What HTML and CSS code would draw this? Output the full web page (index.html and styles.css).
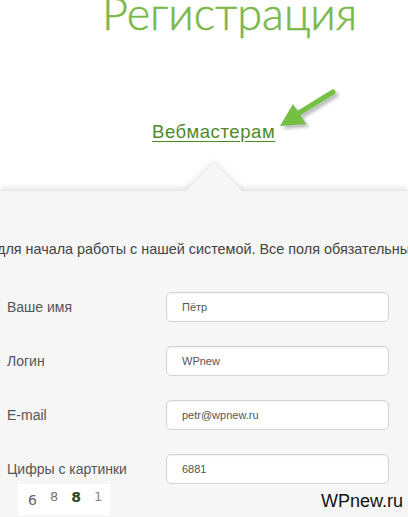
FILE: index.html
```html
<!DOCTYPE html>
<html lang="ru">
<head>
  <meta charset="UTF-8" />
  <meta name="viewport" content="width=device-width, initial-scale=1.0"/>
  <title>Регистрация</title>
  <link rel="stylesheet" href="styles.css">
</head>
<body>
  <div class="page">
    <h1 class="title">Регистрация</h1>

    <div class="tabs">
      <a href="#" class="tab">Вебмастерам</a>
      <svg class="arrow" width="80" height="56" viewBox="0 0 80 56">
        <defs>
          <filter id="blur" x="-20%" y="-20%" width="140%" height="140%">
            <feGaussianBlur stdDeviation="1.6"/>
          </filter>
        </defs>
        <g fill="#8a8a8a" stroke="#8a8a8a" opacity="0.55" filter="url(#blur)" transform="translate(3,3)">
          <line x1="62" y1="9" x2="28" y2="30" stroke-width="5" stroke-linecap="round"/>
          <polygon points="9,43 35,41 22,21" stroke="none"/>
        </g>
        <g fill="#74c043" stroke="#74c043">
          <line x1="62" y1="9" x2="28" y2="30" stroke-width="5" stroke-linecap="round"/>
          <polygon points="9,43 35,41 22,21" stroke="none"/>
        </g>
      </svg>
    </div>

    <div class="panel">
      <p class="intro">для начала работы с нашей системой. Все поля обязательны.</p>

      <form class="form">
        <label class="label" for="name">Ваше имя</label>
        <input class="field" id="name" type="text" value="Пётр" />

        <label class="label" for="login">Логин</label>
        <input class="field" id="login" type="text" value="WPnew" />

        <label class="label" for="email">E-mail</label>
        <input class="field" id="email" type="text" value="petr@wpnew.ru" />

        <label class="label" for="code">Цифры с картинки</label>
        <input class="field" id="code" type="text" value="6881" />
      </form>

      <div class="captcha">
        <span class="d1">6</span>
        <span class="d2">8</span>
        <span class="d3">8</span>
        <span class="d4">1</span>
      </div>
    </div>

    <div class="mark">WPnew.ru</div>
  </div>
</body>
</html>
```

FILE: styles.css
```css
body {
  margin: 0;
  background: #fff;
  font-family: 'Liberation Sans', Arial, sans-serif;
  color: #555;
  overflow: hidden;
}
.page {
  position: relative;
  width: 408px;
  height: 517px;
  overflow: hidden;
}
.title {
  margin: -11px 0 0 102px;
  font-family: 'Lato', 'Open Sans', sans-serif;
  font-weight: 300;
  font-size: 45px;
  line-height: 48px;
  color: #7ab84a;
  -webkit-text-stroke: 0.5px #7ab84a;
  white-space: nowrap;
}
.tabs {
  position: relative;
  margin-top: 84px;
  padding-left: 152px;
  height: 30px;
}
.tab {
  font-size: 18.5px;
  line-height: 22px;
  letter-spacing: 0.6px;
  color: #4f8a2b;
  text-decoration: underline;
  text-underline-offset: 3px;
}
.arrow {
  position: absolute;
  left: 271px;
  top: -38px;
}
.panel {
  position: relative;
  margin-top: 40px;
  height: 400px;
  background: #f6f6f6;
  box-shadow: 0 -2px 7px rgba(0,0,0,0.14);
}
/* notch over the tab, only the upper half is shown */
.panel::before {
  content: "";
  position: absolute;
  z-index: 1;
  left: 194px;
  top: -20px;
  width: 40px;
  height: 40px;
  background: #f6f6f6;
  transform: rotate(45deg);
  box-shadow: -1px -1px 6px rgba(0,0,0,0.12);
  clip-path: polygon(-12px -12px, calc(100% + 12px) -12px, -12px calc(100% + 12px));
}
.intro {
  position: relative;
  margin: 0 0 0 -3px;
  padding-top: 50px;
  font-size: 14.4px;
  color: #444;
  white-space: nowrap;
}
.form {
  display: grid;
  grid-template-columns: 159px 223px;
  row-gap: 24px;
  align-items: center;
  margin-top: 35px;
  padding-left: 7px;
}
.label {
  font-size: 14px;
  color: #555;
}
.field {
  box-sizing: border-box;
  height: 30px;
  padding: 0 0 0 15px;
  border: 1px solid #d4d4d4;
  border-radius: 5px;
  background: #fff;
  box-shadow: inset 0 1px 2px rgba(0,0,0,0.06);
  font-family: 'Liberation Sans', Arial, sans-serif;
  font-size: 11px;
  color: #555;
}
.captcha {
  display: flex;
  gap: 13px;
  width: 92px;
  height: 31px;
  box-sizing: border-box;
  margin: 0 0 0 18px;
  padding: 5px 0 0 10px;
  background: #fff;
  font-family: 'DejaVu Sans', sans-serif;
  font-size: 14px;
}
.d1 { color: #666; margin-top: 3px; }
.d2 { color: #777; font-size: 13px; }
.d3 { color: #2f4a2a; font-weight: bold; }
.d4 { color: #888; font-size: 13px; }
.mark {
  position: absolute;
  right: 5px;
  bottom: 5px;
  font-size: 18px;
  color: #111;
}
```
